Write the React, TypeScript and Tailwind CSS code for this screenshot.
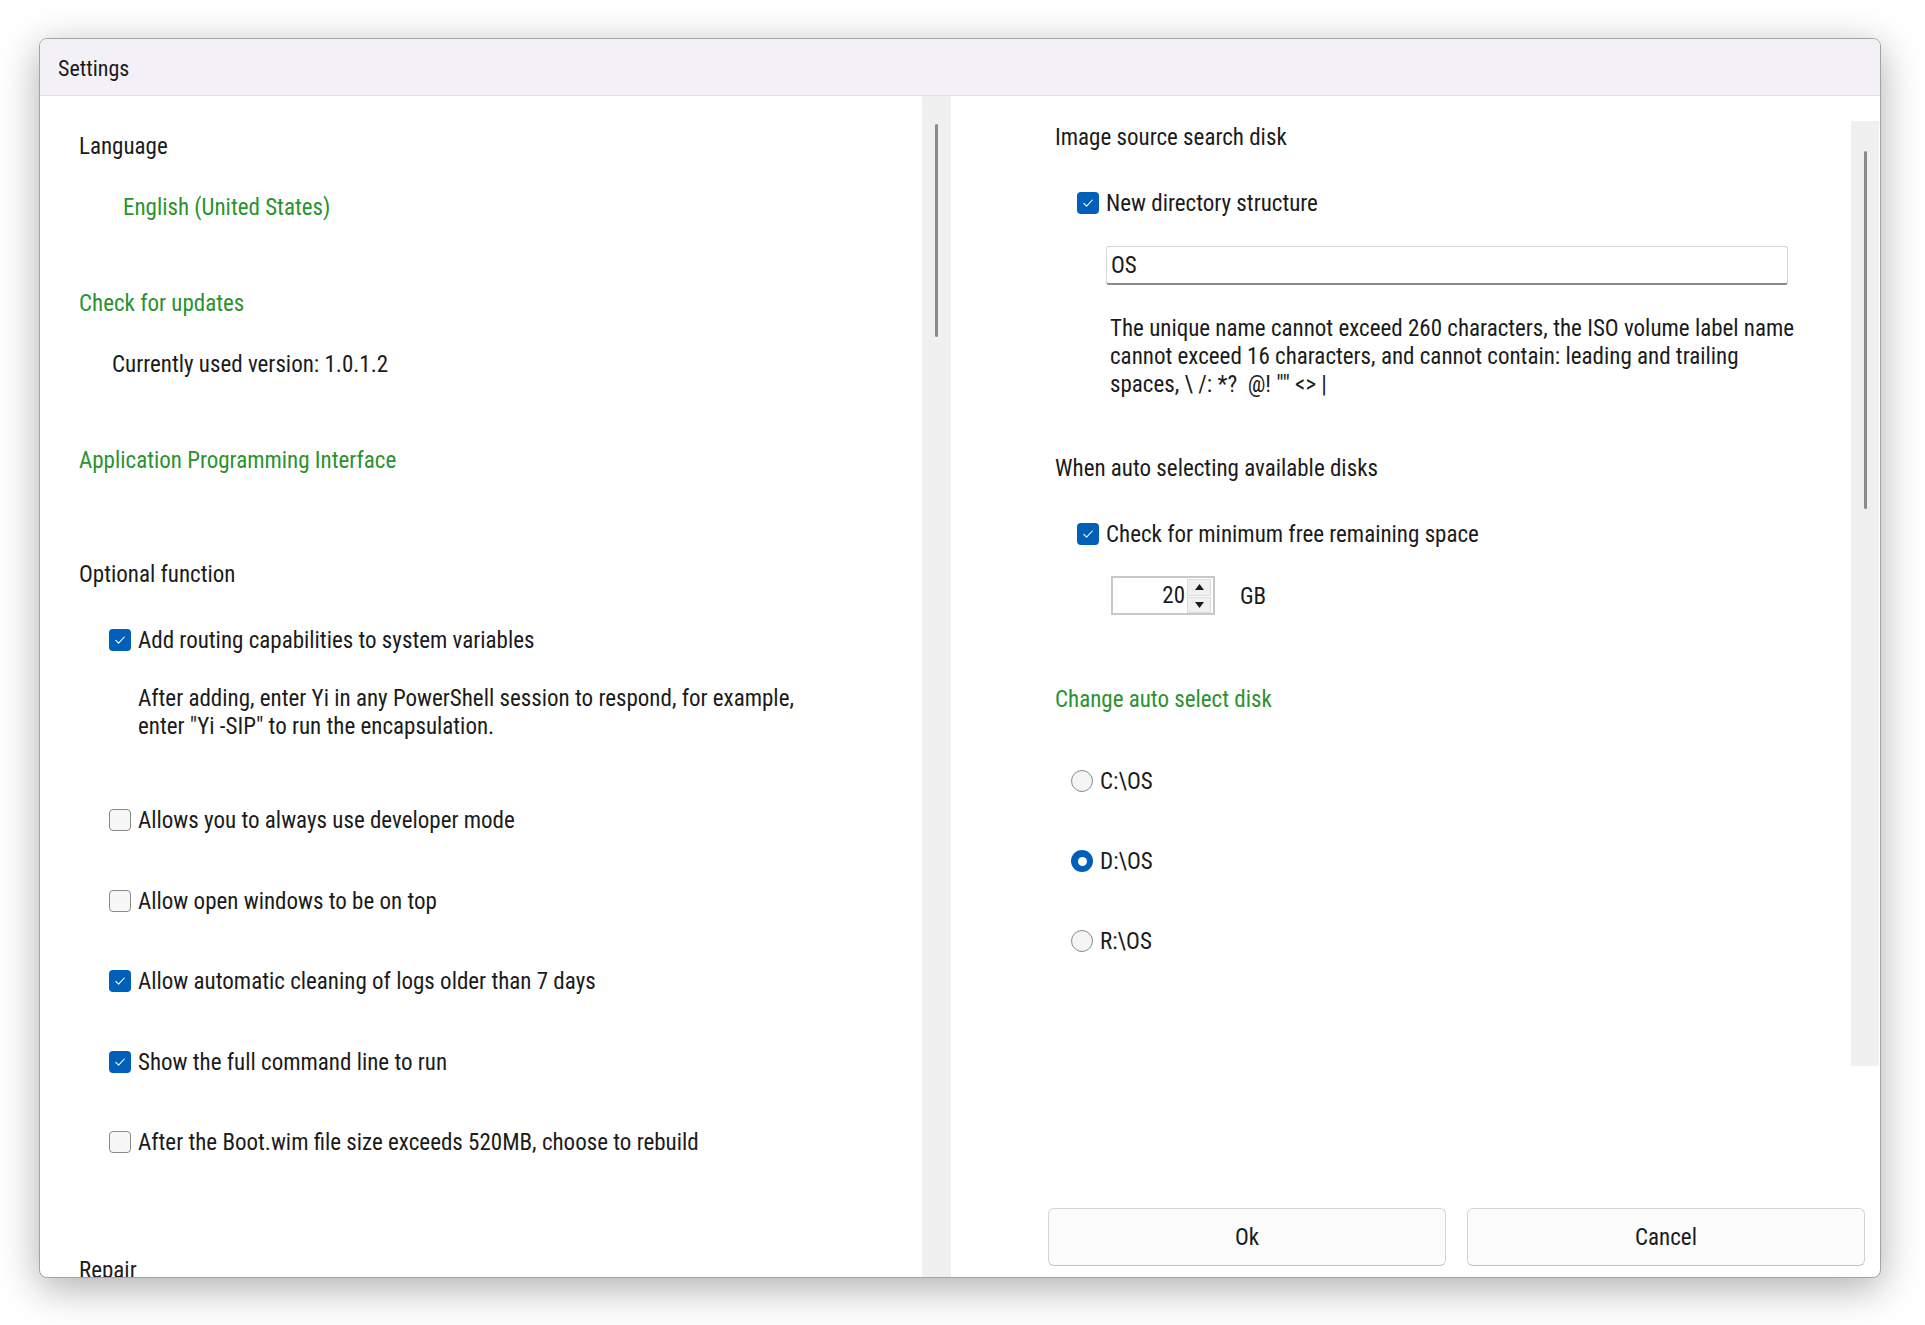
import React from "react";

function CheckBox({ checked }: { checked: boolean }) {
  if (checked) {
    return (
      <div className="w-[22px] h-[22px] rounded-[4px] bg-[#005fb8] flex items-center justify-center shrink-0">
        <svg width="14" height="14" viewBox="0 0 14 14" fill="none">
          <path d="M2.8 7.4 L5.6 10.2 L11.3 4" stroke="#ffffff" strokeWidth="1.1" strokeLinecap="round" strokeLinejoin="round" />
        </svg>
      </div>
    );
  }
  return <div className="w-[22px] h-[22px] rounded-[4px] border-[1.5px] border-[#8a8a8a] bg-[#f7f7f7] shrink-0" />;
}

function CheckRow({ checked, label, className }: { checked: boolean; label: string; className?: string }) {
  return (
    <div className={"h-[40px] flex items-center gap-[7px] whitespace-nowrap " + (className ?? "")}>
      <CheckBox checked={checked} />
      <span className="pt-[2px]">{label}</span>
    </div>
  );
}

function Radio({ checked, label, className }: { checked: boolean; label: string; className?: string }) {
  return (
    <div className={"h-[40px] flex items-center gap-[7px] " + (className ?? "")}>
      {checked ? (
        <div className="w-[22px] h-[22px] rounded-full bg-[#005fb8] flex items-center justify-center shrink-0">
          <div className="w-[9px] h-[9px] rounded-full bg-white" />
        </div>
      ) : (
        <div className="w-[22px] h-[22px] rounded-full border-[1.5px] border-[#8a8a8a] bg-[#f5f5f5] shrink-0" />
      )}
      <span className="pt-[2px]">{label}</span>
    </div>
  );
}

export default function App() {
  return (
    <div className="w-[1925px] h-[1325px] bg-white pt-[38px] pl-[39px] text-[23px] text-[#1b1b1b] font-['Roboto_Condensed','Roboto',sans-serif]">
      <div className="w-[1842px] h-[1240px] rounded-[8px] border border-[#a3a3a3] bg-white overflow-hidden flex flex-col shadow-[0_10px_40px_rgba(0,0,0,0.32)]">
        {/* Title bar */}
        <div className="h-[57px] shrink-0 bg-[#f3f0f7] border-b border-[#e4e0ea] flex items-center pl-[18px] pt-[2px] text-[22px] text-[#1a1a1a]">
          Settings
        </div>

        {/* Body */}
        <div className="flex-1 flex min-h-0">
          {/* Left panel */}
          <div className="w-[882px] shrink-0 overflow-hidden pl-[39px] pt-[31px] flex flex-col whitespace-nowrap">
            <div className="h-[40px] flex items-center shrink-0">Language</div>
            <div className="h-[40px] flex items-center shrink-0 mt-[21px] pl-[44px] text-[#2a922e]">English (United States)</div>
            <div className="h-[40px] flex items-center shrink-0 mt-[56px] text-[#2a922e]">Check for updates</div>
            <div className="h-[40px] flex items-center shrink-0 mt-[21px] pl-[33px]">Currently used version: 1.0.1.2</div>
            <div className="h-[40px] flex items-center shrink-0 mt-[56px] text-[#2a922e]">Application Programming Interface</div>
            <div className="h-[40px] flex items-center shrink-0 mt-[74px]">Optional function</div>
            <CheckRow checked label="Add routing capabilities to system variables" className="shrink-0 mt-[25px] pl-[30px]" />
            <div className="shrink-0 mt-[25px] pl-[59px] leading-[28px]">
              After adding, enter Yi in any PowerShell session to respond, for example,
              <br />
              enter "Yi -SIP" to run the encapsulation.
            </div>
            <CheckRow checked={false} label="Allows you to always use developer mode" className="shrink-0 mt-[59px] pl-[30px]" />
            <CheckRow checked={false} label="Allow open windows to be on top" className="shrink-0 mt-[41px] pl-[30px]" />
            <CheckRow checked label="Allow automatic cleaning of logs older than 7 days" className="shrink-0 mt-[40px] pl-[30px]" />
            <CheckRow checked label="Show the full command line to run" className="shrink-0 mt-[41px] pl-[30px]" />
            <CheckRow checked={false} label="After the Boot.wim file size exceeds 520MB, choose to rebuild" className="shrink-0 mt-[40px] pl-[30px]" />
            <div className="h-[40px] flex items-center shrink-0 mt-[89px]">Repair</div>
          </div>

          {/* Left scrollbar */}
          <div className="w-[29px] shrink-0 bg-[#f0f0f0] flex justify-center">
            <div className="w-[3px] h-[213px] mt-[28px] rounded-full bg-[#8b8b8b]" />
          </div>

          {/* Right panel */}
          <div className="flex-1 flex flex-col min-w-0">
            <div className="h-[970px] shrink-0 flex">
              <div className="flex-1 pl-[104px] pt-[22px] flex flex-col whitespace-nowrap">
                <div className="h-[40px] flex items-center shrink-0">Image source search disk</div>
                <CheckRow checked label="New directory structure" className="shrink-0 mt-[25px] pl-[22px]" />
                <div className="shrink-0 mt-[23px] ml-[51px] w-[682px] h-[39px] rounded-[3px] border border-[#d6d6d6] border-b-[2px] border-b-[#8a8a8a] bg-white flex items-center pl-[4px] pt-[2px]">
                  OS
                </div>
                <div className="shrink-0 mt-[30px] pl-[55px] leading-[28px]">
                  The unique name cannot exceed 260 characters, the ISO volume label name
                  <br />
                  cannot exceed 16 characters, and cannot contain: leading and trailing
                  <br />
                  spaces, \ /: *?&nbsp; @! "" &lt;&gt; |
                </div>
                <div className="h-[40px] flex items-center shrink-0 mt-[50px]">When auto selecting available disks</div>
                <CheckRow checked label="Check for minimum free remaining space" className="shrink-0 mt-[25px] pl-[22px]" />
                <div className="shrink-0 mt-[22px] ml-[56px] flex items-center">
                  <div className="w-[104px] h-[39px] border-2 border-[#c8c8c8] bg-white flex items-center justify-end pr-[2px]">
                    <span className="mr-[2px] pt-[1px]">20</span>
                    <div className="flex flex-col gap-[1px]">
                      <div className="w-[24px] h-[17px] bg-[#f0f0f0] border border-[#dcdcdc] flex items-center justify-center">
                        <svg width="9" height="6" viewBox="0 0 9 6">
                          <path d="M4.5 0 L9 6 L0 6 Z" fill="#1b1b1b" />
                        </svg>
                      </div>
                      <div className="w-[24px] h-[16px] bg-[#f0f0f0] border border-[#dcdcdc] flex items-center justify-center">
                        <svg width="9" height="6" viewBox="0 0 9 6">
                          <path d="M0 0 L9 0 L4.5 6 Z" fill="#1b1b1b" />
                        </svg>
                      </div>
                    </div>
                  </div>
                  <span className="ml-[25px] pt-[4px]">GB</span>
                </div>
                <div className="h-[40px] flex items-center shrink-0 mt-[64px] pt-[2px] text-[#2a922e]">Change auto select disk</div>
                <Radio checked={false} label="C:\OS" className="shrink-0 mt-[42px] pl-[16px]" />
                <Radio checked label="D:\OS" className="shrink-0 mt-[40px] pl-[16px]" />
                <Radio checked={false} label="R:\OS" className="shrink-0 mt-[40px] pl-[16px]" />
              </div>
              <div className="w-[28px] shrink-0 mt-[25px] mr-[1px] bg-[#f0f0f0] flex justify-center">
                <div className="w-[3px] h-[358px] mt-[30px] rounded-full bg-[#8b8b8b]" />
              </div>
            </div>
            <div className="shrink-0 flex gap-[21px] pl-[97px] pt-[142px]">
              <button className="w-[398px] h-[58px] rounded-[6px] border border-[#d4d4d4] border-b-[#c2c2c2] bg-[#fcfcfc] text-[#1b1b1b] pt-[2px]">
                Ok
              </button>
              <button className="w-[398px] h-[58px] rounded-[6px] border border-[#d4d4d4] border-b-[#c2c2c2] bg-[#fcfcfc] text-[#1b1b1b] pt-[2px]">
                Cancel
              </button>
            </div>
          </div>
        </div>
      </div>
    </div>
  );
}
